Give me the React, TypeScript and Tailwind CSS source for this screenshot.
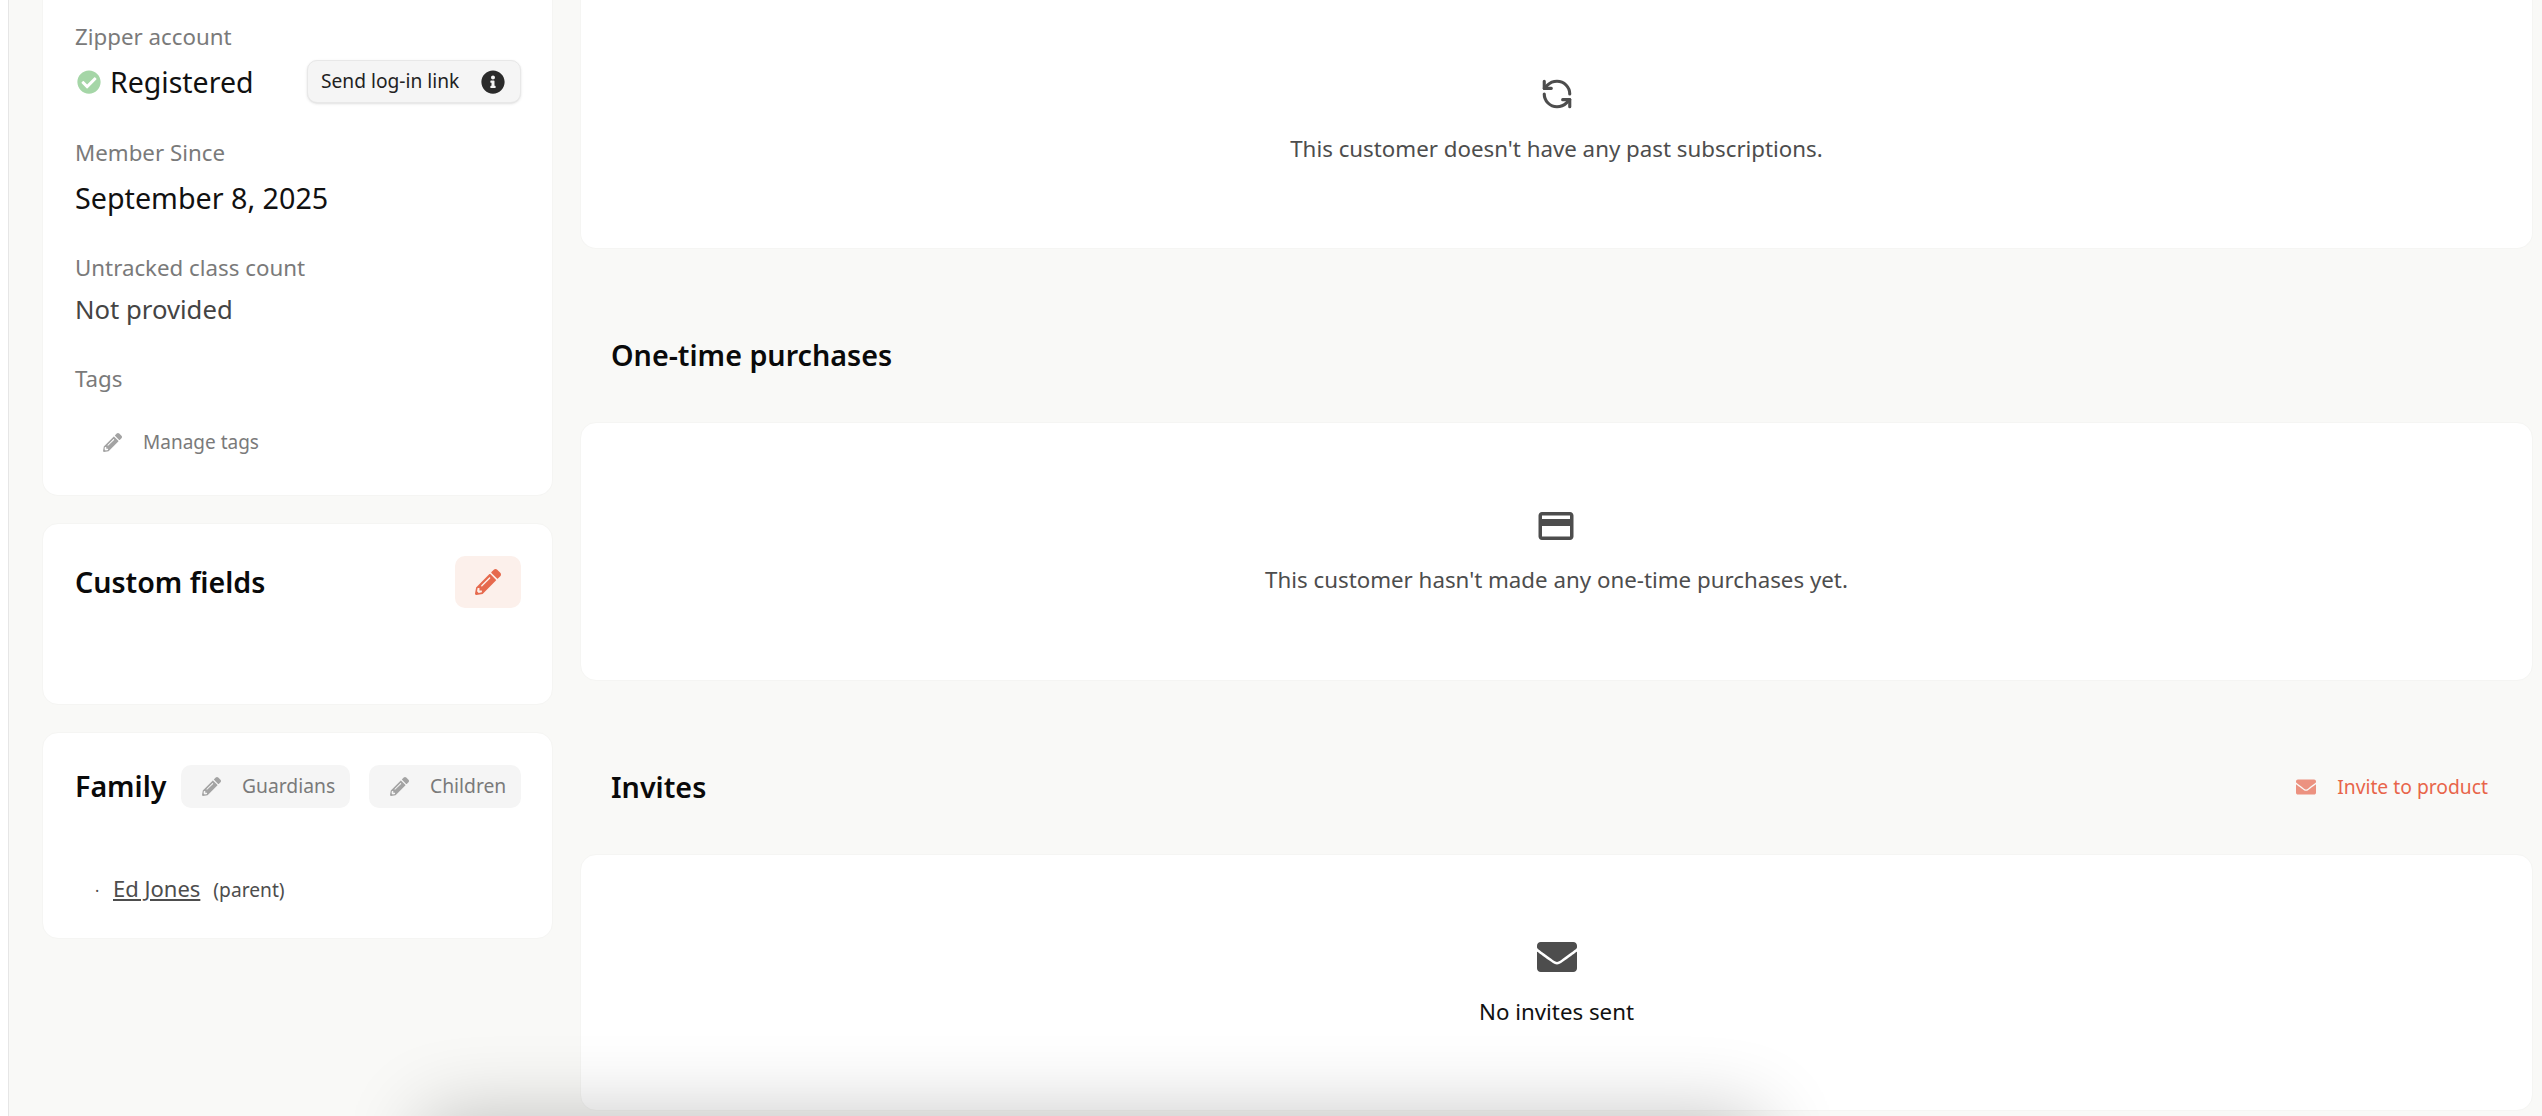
import React from "react";
import { FaPencilAlt, FaEnvelope, FaInfoCircle, FaCheckCircle } from "react-icons/fa";
import { MdCreditCard } from "react-icons/md";
import { RefreshCcw } from "lucide-react";

function Label({ children, className = "" }: { children: React.ReactNode; className?: string }) {
  return <div className={`text-[22.3px] leading-[30px] text-[#7a7a7a] ${className}`}>{children}</div>;
}

function Empty({ icon, text, dark, gap }: { icon: React.ReactNode; text: string; dark?: boolean; gap: string }) {
  return (
    <div className="flex flex-col items-center">
      <div className="h-[36px] flex items-center justify-center">{icon}</div>
      <div className={`${gap} text-[22.3px] leading-[32px] ${dark ? "text-[#111]" : "text-[#4d4d4d]"}`}>{text}</div>
    </div>
  );
}

function SmallBtn({ label, className }: { label: string; className: string }) {
  return (
    <div className={`h-[43px] rounded-[10px] bg-[#f5f5f5] flex items-center text-[#7a7a7a] text-[19.3px] ${className}`}>
      <FaPencilAlt className="text-[#a3a3a3] text-[19px]" />
      <span className="ml-[21px]">{label}</span>
    </div>
  );
}

export default function App() {
  return (
    <div
      className="relative h-[1116px] w-[2542px] overflow-hidden bg-[#f9f9f7] flex"
      style={{ fontFamily: '"Noto Sans", sans-serif' }}
    >
      <div className="w-[9px] shrink-0 bg-white border-r border-[#e6e6e6]" />

      {/* Left column */}
      <div className="ml-[33px] w-[511px] shrink-0 flex flex-col">
        <div className="h-[496px] bg-white rounded-b-[16px] border border-t-0 border-[#f5f5f3] pl-[32px] pr-[31px] pt-[22px]">
          <Label>Zipper account</Label>
          <div className="mt-[8px] flex items-center justify-between h-[43px]">
            <div className="flex items-center">
              <FaCheckCircle className="text-[#a5d6a7] text-[24px] ml-[2px]" />
              <span className="ml-[9px] mt-[2px] text-[28.5px] text-[#111]">Registered</span>
            </div>
            <div className="h-[43px] w-[214px] rounded-[10px] bg-[#f5f5f5] border border-[#e8e8e8] shadow-sm flex items-center pl-[13px] pr-[15px] justify-between text-[19.2px] text-[#222]">
              <span>Send log-in link</span>
              <FaInfoCircle className="text-[#2b2b2b] text-[24px]" />
            </div>
          </div>
          <Label className="mt-[35px]">Member Since</Label>
          <div className="mt-[10px] text-[28.7px] leading-[40px] text-[#111]">September 8, 2025</div>
          <Label className="mt-[35px]">Untracked class count</Label>
          <div className="mt-[9px] text-[25.7px] leading-[36px] text-[#444]">Not provided</div>
          <Label className="mt-[36px]">Tags</Label>
          <div className="mt-[34px] ml-[28px] flex items-center text-[19px] text-[#7a7a7a]">
            <FaPencilAlt className="text-[#a3a3a3] text-[19px]" />
            <span className="ml-[21px]">Manage tags</span>
          </div>
        </div>

        <div className="mt-[27px] h-[182px] bg-white rounded-[16px] border border-[#f5f5f3] pl-[32px] pr-[31px] pt-[32px]">
          <div className="flex items-center justify-between">
            <span className="text-[28.6px] font-semibold text-[#0a0a0a]">Custom fields</span>
            <div className="w-[66px] h-[52px] rounded-[10px] bg-[#fcf0eb] flex items-center justify-center">
              <FaPencilAlt className="text-[#e66a4e] text-[26px]" />
            </div>
          </div>
        </div>

        <div className="mt-[27px] h-[207px] bg-white rounded-[16px] border border-[#f5f5f3] pl-[32px] pr-[31px] pt-[32px]">
          <div className="flex items-center justify-between">
            <span className="text-[28.6px] font-semibold text-[#0a0a0a]">Family</span>
            <div className="flex gap-[19px]">
              <SmallBtn label="Guardians" className="w-[169px] pl-[21px]" />
              <SmallBtn label="Children" className="w-[152px] pl-[21px]" />
            </div>
          </div>
          <div className="mt-[64px] ml-[20px] flex items-baseline text-[#4d4d4d]">
            <span className="text-[16px] w-[18px]">·</span>
            <span className="text-[22px] underline">Ed Jones</span>
            <span className="ml-[13px] text-[19.2px]">(parent)</span>
          </div>
        </div>
      </div>

      {/* Right column */}
      <div className="ml-[27px] w-[1953px] shrink-0 flex flex-col">
        <div className="h-[249px] bg-white rounded-b-[16px] border border-t-0 border-[#f5f5f3] flex justify-center pt-[76px]">
          <Empty gap="mt-[21px]" icon={<RefreshCcw className="text-[#4d4d4d]" size={34} strokeWidth={2.2} />} text="This customer doesn't have any past subscriptions." />
        </div>
        <div className="h-[173px] pl-[31px] pt-[39px] flex items-center">
          <span className="text-[28.7px] font-semibold text-[#0a0a0a]">One-time purchases</span>
        </div>
        <div className="h-[259px] bg-white rounded-[16px] border border-[#f5f5f3] flex justify-center pt-[85px]">
          <Empty gap="mt-[20px]" icon={<MdCreditCard className="text-[#4d4d4d]" size={42} />} text="This customer hasn't made any one-time purchases yet." />
        </div>
        <div className="h-[173px] pl-[31px] pr-[45px] pt-[39px] flex items-center justify-between">
          <span className="text-[28.7px] font-semibold text-[#0a0a0a]">Invites</span>
          <div className="flex items-center text-[19.3px] text-[#e8654a]">
            <FaEnvelope className="text-[#ec9280] text-[20px]" />
            <span className="ml-[21px]">Invite to product</span>
          </div>
        </div>
        <div className="h-[257px] bg-white rounded-[16px] border border-[#f5f5f3] flex justify-center pt-[84px]">
          <Empty dark gap="mt-[21px]" icon={<FaEnvelope className="text-[#4d4d4d]" size={40} />} text="No invites sent" />
        </div>
      </div>

      {/* Bottom blurred shadow overlay */}
      <div className="absolute left-[425px] top-[1116px] w-[1335px] h-[100px] shadow-[0_0_80px_rgba(0,0,0,0.24)]" />
    </div>
  );
}
